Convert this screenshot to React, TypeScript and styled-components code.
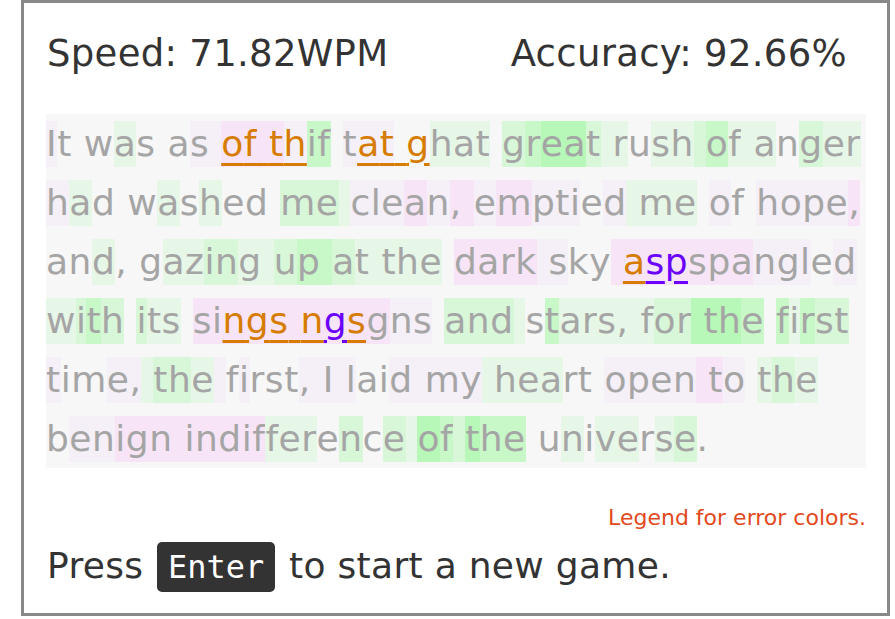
import React from "react";
import styled, { createGlobalStyle } from "styled-components";

const Global = createGlobalStyle`
  html, body { margin: 0; padding: 0; background: #ffffff; }
  body { font-family: "DejaVu Sans", "Open Sans", sans-serif; }
`;

const BG: Record<string, string> = {
  ".": "transparent",
  a: "#e7f7e7",
  b: "#d8f7d8",
  c: "#c8f7c8",
  d: "#b7f7b7",
  p: "#f5eff7",
  q: "#f7e5f7",
};

type Kind = "n" | "o" | "v";
type Seg = { t: string; k?: Kind };
type Line = { segs: Seg[]; bg: string };

const LINES: Line[] = [
  {
    segs: [
      { t: "It was as " },
      { t: "of th", k: "o" },
      { t: "if t" },
      { t: "at g", k: "o" },
      { t: "hat great rush of anger" },
    ],
    bg: "p...a...pp" + "qqqqp" + "cc.p" + "pp.." + "aaa.bcddbaa.aabcaaa.baa",
  },
  {
    segs: [{ t: "had washed me clean, emptied me of hope," }],
    bg: "pa...a.a..." + "bba" + "pppqpqq" + "pqppp.pa" + "aa." + "p.." + "ppppq",
  },
  {
    segs: [
      { t: "and, gazing up at the dark sky " },
      { t: "a", k: "o" },
      { t: "sp", k: "v" },
      { t: "spangled" },
    ],
    bg: "..a.." + ".aabbaa" + "bcc" + "baa" + "aaa." + "qqqqp" + "p..q" + "q" + "qq" + "qqqppp.p",
  },
  {
    segs: [
      { t: "with its si" },
      { t: "ngs n", k: "o" },
      { t: "g", k: "v" },
      { t: "s", k: "o" },
      { t: "gns and stars, for the first" },
    ],
    bg: "abcb." + "baa." + "qq" + "qqqqq" + "q" + "q" + "qpp." + "bbba" + ".caaaaa" + "abbd" + "ddc." + "cacbb",
  },
  {
    segs: [{ t: "time, the first, I laid my heart open to the" }],
    bg: "p..ppa" + "bbap" + ".p...pp" + "pp" + "p..pp" + "ppa" + "aaa..." + "ppppq" + "qp." + "aba",
  },
  {
    segs: [{ t: "benign indifference of the universe." }],
    bg: ".ppqqqq" + "qqqqqaaa.b.ba" + "dcb" + "dcc." + ".a.aa.ab.",
  },
];

const Frame = styled.div`
  box-sizing: border-box;
  width: 869px;
  height: 616px;
  margin-left: 21px;
  border: 3px solid #888888;
  padding: 28px 21px 0 22px;
  display: flex;
  flex-direction: column;
  font-family: "DejaVu Sans", "Open Sans", sans-serif;
`;

const Stats = styled.div`
  display: flex;
  justify-content: space-between;
  padding: 0 19px 0 1px;
  height: 46px;
  line-height: 46px;
  font-size: 37px;
  letter-spacing: 0.3px;
  color: #333333;
  margin-bottom: 37px;
`;

const Passage = styled.div`
  background: #f7f7f7;
  display: flex;
  flex-direction: column;
`;

const TextRow = styled.div`
  height: 59px;
  display: flex;
  align-items: center;
`;

const colorFor = (k: Kind) => (k === "o" ? "#d67c00" : k === "v" ? "#6b00ff" : "#a5a5a5");

const Ch = styled.span<{ $bg: string; $kind: Kind }>`
  display: inline-block;
  height: 46px;
  line-height: 46px;
  font-size: 36px;
  letter-spacing: 0.5px;
  white-space: pre;
  background: ${(p) => p.$bg};
  color: ${(p) => colorFor(p.$kind)};
  text-decoration: ${(p) => (p.$kind === "n" ? "none" : "underline")};
  text-decoration-thickness: 3px;
  text-underline-offset: 7px;
  text-decoration-color: ${(p) => colorFor(p.$kind)};
`;

const Legend = styled.div`
  margin-top: 37px;
  text-align: right;
  font-size: 22px;
  line-height: 26px;
  color: #e2491c;
`;

const Prompt = styled.div`
  margin-top: 10px;
  font-size: 36px;
  line-height: 50px;
  letter-spacing: 0.3px;
  color: #333333;
  padding-left: 1px;
`;

const Key = styled.kbd`
  display: inline-block;
  height: 50px;
  line-height: 50px;
  padding: 0 11px;
  margin: 0 2px;
  background: #333333;
  color: #ffffff;
  border-radius: 5px;
  letter-spacing: 0;
  font-family: "DejaVu Sans Mono", "Liberation Mono", monospace;
  font-size: 32px;
`;

function PassageLine({ line }: { line: Line }) {
  let i = 0;
  const chars: React.ReactNode[] = [];
  line.segs.forEach((s, si) => {
    for (const c of s.t) {
      const code = line.bg[i] ?? ".";
      chars.push(
        <Ch key={`${si}-${i}`} $bg={BG[code] ?? "transparent"} $kind={s.k ?? "n"}>
          {c}
        </Ch>
      );
      i++;
    }
  });
  return <TextRow>{chars}</TextRow>;
}

export default function App() {
  return (
    <>
      <Global />
      <Frame>
        <Stats>
          <span>Speed: 71.82WPM</span>
          <span>Accuracy: 92.66%</span>
        </Stats>
        <Passage>
          {LINES.map((l, idx) => (
            <PassageLine key={idx} line={l} />
          ))}
        </Passage>
        <Legend>Legend for error colors.</Legend>
        <Prompt>
          Press <Key>Enter</Key> to start a new game.
        </Prompt>
      </Frame>
    </>
  );
}
